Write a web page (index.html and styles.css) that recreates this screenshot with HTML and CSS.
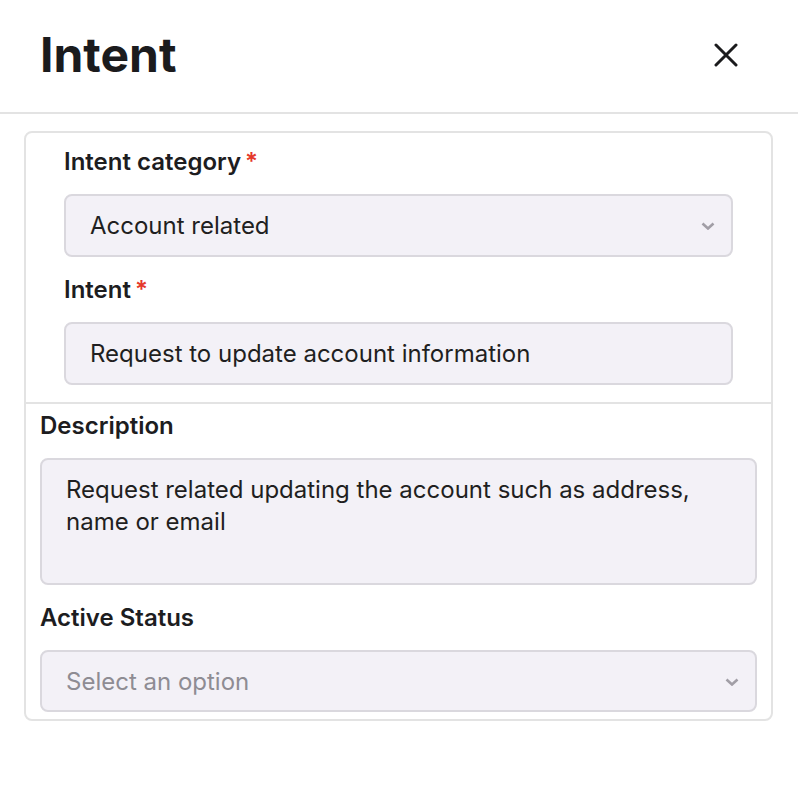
FILE: index.html
```html
<!DOCTYPE html>
<html lang="en">
<head>
  <meta charset="UTF-8" />
  <meta name="viewport" content="width=device-width, initial-scale=1.0" />
  <title>Intent</title>
  <link rel="stylesheet" href="styles.css">
</head>
<body>
  <header class="panel-head">
    <h1>Intent</h1>
    <button class="close-btn" aria-label="Close">
      <svg width="24" height="24" viewBox="0 0 24 24" fill="none" stroke="#1b1b1d" stroke-width="3" stroke-linecap="round"><path d="M2 2L22 22M22 2L2 22"/></svg>
    </button>
  </header>

  <div class="card">
    <div class="section section-top">
      <label>Intent category<span class="req">*</span></label>
      <div class="field select">
        <span>Account related</span>
        <svg class="chev" width="14" height="8" viewBox="0 0 14 8" fill="none" stroke="#a19ea6" stroke-width="2.6"><path d="M1.5 1.5l5.5 5 5.5-5"/></svg>
      </div>

      <label class="mt">Intent<span class="req">*</span></label>
      <div class="field"><span>Request to update account information</span></div>
    </div>

    <div class="section section-bottom">
      <label>Description</label>
      <div class="field area">Request related updating the account such as address, name or email</div>

      <label class="mt">Active Status</label>
      <div class="field select short">
        <span class="placeholder">Select an option</span>
        <svg class="chev" width="14" height="8" viewBox="0 0 14 8" fill="none" stroke="#a19ea6" stroke-width="2.6"><path d="M1.5 1.5l5.5 5 5.5-5"/></svg>
      </div>
    </div>
  </div>
</body>
</html>
```

FILE: styles.css
```css
*,*::before,*::after{box-sizing:border-box;margin:0;padding:0}
body{font-family:Inter,'Noto Sans',sans-serif;background:#fff;color:#1d1d1f;width:798px}
.panel-head{height:114px;border-bottom:2px solid #e3e3e3;display:flex;align-items:center;justify-content:space-between;padding:0 60px 0 40px}
.panel-head h1{font-size:48px;font-weight:700;line-height:56px;color:#1b1b1d;margin-top:-3px}
.close-btn{background:none;border:none;width:24px;height:24px;display:flex;cursor:pointer;margin-top:-2px}
.card{margin:17px 25px 0 24px;border:2px solid #e3e3e3;border-radius:8px}
.section-top{padding:15px 38px 17px;border-bottom:2px solid #e3e3e3}
.section-bottom{padding:8px 14px 7px}
label{display:block;font-size:24px;font-weight:600;line-height:28px;color:#1d1d1f;margin-bottom:18px}
label.mt{margin-top:19px}
.req{color:#e5382c;margin-left:4px}
.field{height:63px;background:#f3f1f7;border:2px solid #dad8de;border-radius:8px;display:flex;align-items:center;padding:0 16px 0 24px;font-size:24px;color:#1f1f21}
.field.short{height:62px}
.select{justify-content:space-between}
.chev{margin-top:1px}
.area{height:127px;align-items:flex-start;padding:14px 24px;line-height:32px}
.placeholder{color:#8e8c93}
```
